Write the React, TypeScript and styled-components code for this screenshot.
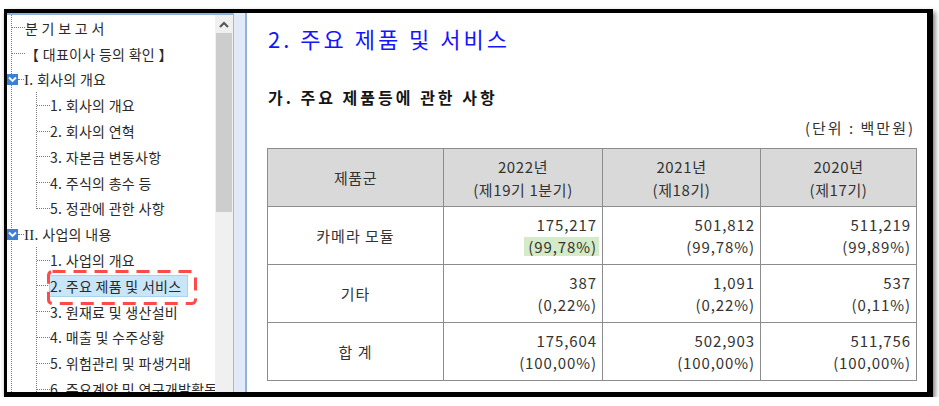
import React from "react";
import styled, { createGlobalStyle } from "styled-components";

const GlobalStyle = createGlobalStyle`
  html, body {
    margin: 0;
    padding: 0;
    background: #ffffff;
  }
  body {
    font-family: "Noto Sans CJK KR", "Noto Sans", sans-serif;
  }
`;

const Frame = styled.div`
  margin: 9px 0 0 4px;
  width: 929px;
  height: 388px;
  box-sizing: border-box;
  border-style: solid;
  border-color: #000;
  border-width: 4px 6px 5px 3px;
  box-shadow: 2px 3px 5px rgba(0, 0, 0, 0.55);
  display: flex;
  overflow: hidden;
  background: #fff;
`;

/* ---------- left: document tree ---------- */

const LeftPane = styled.div`
  width: 226px;
  flex: none;
  display: flex;
  border-top: 2px solid #8eb1de;
`;

const Tree = styled.div`
  flex: 1;
  position: relative;
  overflow: hidden;
  padding-left: 4px;
  font-size: 14px;
  color: #2a2a2a;
`;

const Trunk = styled.div`
  border-left: 1px dotted #7a7a7a;
  min-height: 100%;
`;

const Branch = styled.div<{ $closed?: boolean }>`
  position: relative;
  margin-left: 24px;
  border-left: 1px dotted #7a7a7a;
  &::after {
    content: "";
    position: absolute;
    left: -1px;
    bottom: 0;
    width: 1px;
    height: 12px;
    background: ${(p) => (p.$closed ? "#fff" : "transparent")};
  }
`;

const Row = styled.div`
  display: flex;
  align-items: center;
  height: 25.8px;
  white-space: nowrap;
`;

const Connector = styled.span<{ $w: number }>`
  flex: none;
  width: ${(p) => p.$w}px;
  border-top: 1px dotted #7a7a7a;
`;

const Label = styled.span<{ $selected?: boolean }>`
  position: relative;
  line-height: 20px;
  padding: ${(p) => (p.$selected ? "0 6px 0 0" : "0")};
  background: ${(p) => (p.$selected ? "#c8e6f8" : "transparent")};
  outline: ${(p) => (p.$selected ? "1px solid #a9d4f0" : "none")};
  letter-spacing: 0.3px;
`;

const Numeral = styled.span`
  font-family: "Liberation Serif", serif;
  font-size: 15px;
`;

const Check = styled.span`
  flex: none;
  margin-left: -5px;
  width: 11px;
  height: 11px;
  background: #3b7fd9;
  display: flex;
  align-items: center;
  justify-content: center;
`;

const Marker = styled.svg`
  position: absolute;
  left: -3px;
  top: -6px;
  overflow: visible;
  pointer-events: none;
`;

const ScrollBar = styled.div`
  width: 18px;
  flex: none;
  background: #f0f0f0;
  display: flex;
  flex-direction: column;
`;

const ScrollButton = styled.div`
  height: 18px;
  display: flex;
  align-items: center;
  justify-content: center;
`;

const Thumb = styled.div`
  margin: 0 1px;
  height: 179px;
  background: #cdcdcd;
`;

const Splitter = styled.div`
  width: 14px;
  flex: none;
  box-sizing: border-box;
  background: #e1eaf6;
  border-left: 1px solid #a4b9d6;
  border-right: 2px solid #92b2de;
`;

/* ---------- right: document body ---------- */

const Content = styled.div`
  flex: 1;
  padding: 10px 0 0 20px;
  color: #333;
`;

const Title = styled.h1`
  margin: 0;
  padding-left: 1px;
  font-size: 22px;
  font-weight: 400;
  line-height: 30px;
  letter-spacing: 3px;
  color: #1414ff;
`;

const SubTitle = styled.h2`
  margin: 33px 0 0;
  padding-left: 1px;
  font-size: 16px;
  font-weight: 700;
  line-height: 22px;
  letter-spacing: 3px;
  color: #151515;
`;

const Unit = styled.div`
  width: 649px;
  margin-top: 11px;
  box-sizing: border-box;
  padding-right: 1px;
  text-align: right;
  font-size: 15px;
  line-height: 18px;
  letter-spacing: 2px;
  color: #333;
`;

const Table = styled.table`
  margin-top: 11px;
  width: 649px;
  border-collapse: collapse;
  table-layout: fixed;
  border: 1px solid #6f6f6f;
  font-size: 15px;
  color: #333;
`;

const HeadCell = styled.th`
  height: 57px;
  padding: 0;
  background: #d9d9d9;
  border: 1px solid #8c8c8c;
  font-weight: 400;
  line-height: 23px;
  text-align: center;
  letter-spacing: 0.6px;
`;

const NameCell = styled.td`
  height: 57px;
  padding: 0;
  border: 1px solid #8c8c8c;
  text-align: center;
  letter-spacing: 1px;
`;

const NumCell = styled.td`
  height: 57px;
  padding: 0 5px 0 0;
  border: 1px solid #8c8c8c;
  text-align: right;
  line-height: 22px;
  letter-spacing: 0.9px;
`;

const Mark = styled.span<{ $on?: boolean }>`
  display: inline-block;
  line-height: 19px;
  padding: 0 2px 0 4px;
  margin-right: -2px;
  background: ${(p) => (p.$on ? "#d5eac6" : "transparent")};
`;

type Node = { text: React.ReactNode; check?: boolean; children?: string[]; closed?: boolean };

const tree: Node[] = [
  { text: "분 기 보 고 서" },
  { text: "【 대표이사 등의 확인 】" },
  {
    text: (
      <>
        <Numeral>I</Numeral>. 회사의 개요
      </>
    ),
    check: true,
    closed: true,
    children: ["1. 회사의 개요", "2. 회사의 연혁", "3. 자본금 변동사항", "4. 주식의 총수 등", "5. 정관에 관한 사항"],
  },
  {
    text: (
      <>
        <Numeral>II</Numeral>. 사업의 내용
      </>
    ),
    check: true,
    children: [
      "1. 사업의 개요",
      "2. 주요 제품 및 서비스",
      "3. 원재료 및 생산설비",
      "4. 매출 및 수주상황",
      "5. 위험관리 및 파생거래",
      "6. 주요계약 및 연구개발활동",
    ],
  },
];

const SELECTED = "2. 주요 제품 및 서비스";

const rows = [
  { name: "카메라 모듈", values: [["175,217", "(99,78%)"], ["501,812", "(99,78%)"], ["511,219", "(99,89%)"]] },
  { name: "기타", values: [["387", "(0,22%)"], ["1,091", "(0,22%)"], ["537", "(0,11%)"]] },
  { name: "합 계", values: [["175,604", "(100,00%)"], ["502,903", "(100,00%)"], ["511,756", "(100,00%)"]] },
];

const DashedOutline = () => (
  <Marker width={150} height={35}>
    <rect
      x={1.5}
      y={1.5}
      width={147}
      height={32}
      rx={4}
      fill="none"
      stroke="#ff4a4a"
      strokeWidth={3}
      strokeDasharray="13 8"
    />
  </Marker>
);

const CheckIcon = () => (
  <Check>
    <svg width="9" height="7" viewBox="0 0 9 7">
      <polyline points="1,1.5 4.5,5 8,1.5" fill="none" stroke="#fff" strokeWidth="1.8" />
    </svg>
  </Check>
);

export default function App() {
  return (
    <>
      <GlobalStyle />
      <Frame>
        <LeftPane>
          <Tree>
            <Trunk>
              {tree.map((node, i) => (
                <React.Fragment key={i}>
                  <Row>
                    {node.check ? (
                      <>
                        <CheckIcon />
                        <Connector $w={6} />
                      </>
                    ) : (
                      <Connector $w={13} />
                    )}
                    <Label>{node.text}</Label>
                  </Row>
                  {node.children && (
                    <Branch $closed={node.closed}>
                      {node.children.map((c) => (
                        <Row key={c}>
                          <Connector $w={13} />
                          <Label $selected={c === SELECTED}>
                            {c}
                            {c === SELECTED && <DashedOutline />}
                          </Label>
                        </Row>
                      ))}
                    </Branch>
                  )}
                </React.Fragment>
              ))}
            </Trunk>
          </Tree>
          <ScrollBar>
            <ScrollButton>
              <svg width="10" height="7" viewBox="0 0 10 7">
                <polyline points="1,6 5,2 9,6" fill="none" stroke="#555" strokeWidth="2" />
              </svg>
            </ScrollButton>
            <Thumb />
          </ScrollBar>
        </LeftPane>
        <Splitter />
        <Content>
          <Title>2. 주요 제품 및 서비스</Title>
          <SubTitle>가. 주요 제품등에 관한 사항</SubTitle>
          <Unit>(단위 : 백만원)</Unit>
          <Table>
            <colgroup>
              <col style={{ width: 176 }} />
              <col style={{ width: 159 }} />
              <col style={{ width: 158 }} />
              <col style={{ width: 156 }} />
            </colgroup>
            <thead>
              <tr>
                <HeadCell>제품군</HeadCell>
                <HeadCell>
                  2022년
                  <br />
                  (제19기 1분기)
                </HeadCell>
                <HeadCell>
                  2021년
                  <br />
                  (제18기)
                </HeadCell>
                <HeadCell>
                  2020년
                  <br />
                  (제17기)
                </HeadCell>
              </tr>
            </thead>
            <tbody>
              {rows.map((r, ri) => (
                <tr key={r.name}>
                  <NameCell>{r.name}</NameCell>
                  {r.values.map(([num, pct], ci) => (
                    <NumCell key={ci}>
                      {num}
                      <br />
                      <Mark $on={ri === 0 && ci === 0}>{pct}</Mark>
                    </NumCell>
                  ))}
                </tr>
              ))}
            </tbody>
          </Table>
        </Content>
      </Frame>
    </>
  );
}
